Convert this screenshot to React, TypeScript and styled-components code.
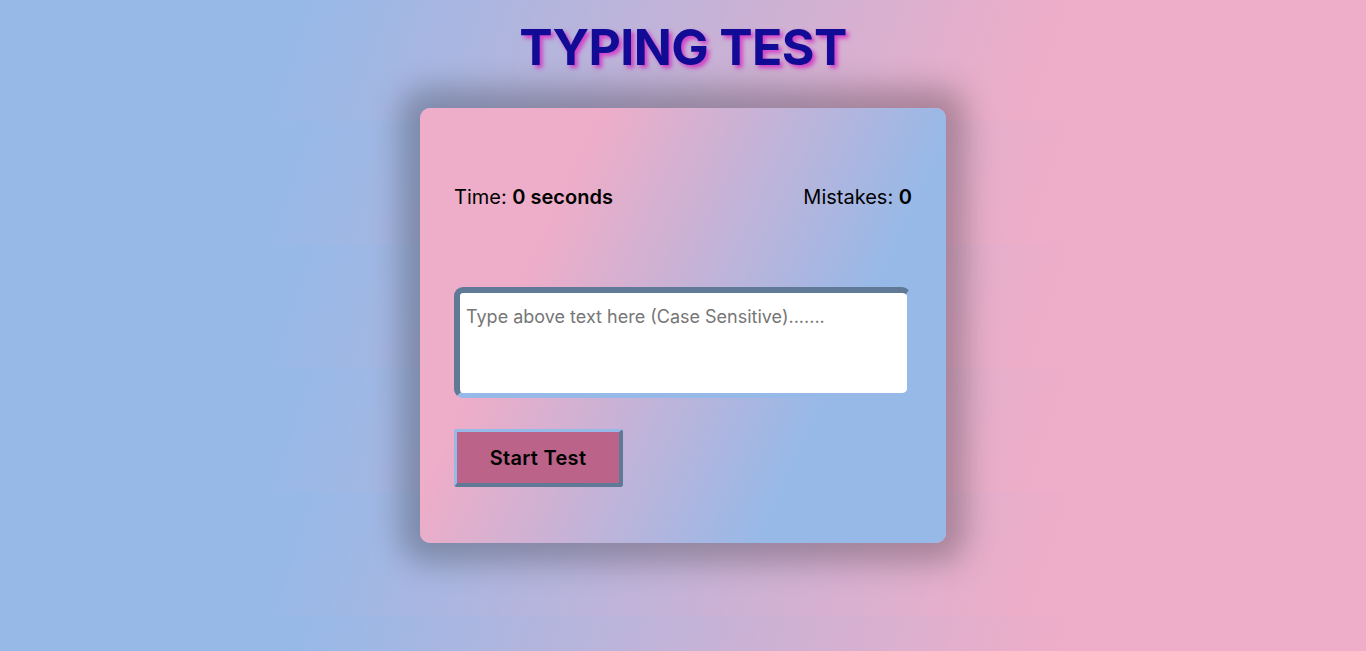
import React from "react";
import styled, { createGlobalStyle } from "styled-components";

const Global = createGlobalStyle`
  html, body { margin: 0; padding: 0; }
  body { font-family: Inter, "Noto Sans", sans-serif; }
`;

const Page = styled.div`
  min-height: 100vh;
  display: flex;
  flex-direction: column;
  align-items: center;
  background-image: linear-gradient(108deg, #96b9e8 21%, #eeadc8 76%);
  background-size: 100% 123.75px;
  background-position: 0 -2.75px;
  background-repeat: repeat;
`;

const Title = styled.h1`
  margin: 17px 0 31px;
  font-family: Inter, sans-serif;
  font-size: 50px;
  line-height: 60px;
  font-weight: 700;
  color: #110b96;
  text-shadow: 3px 3px 4px #d33fc8;
  letter-spacing: -0.6px;
`;

const Card = styled.div`
  width: 526px;
  height: 435px;
  box-sizing: border-box;
  padding: 34px 34px 0;
  border-radius: 10px;
  background: linear-gradient(115deg, #eeadc8 25%, #96b9e8 75%);
  box-shadow: 0 0 30px 20px rgba(0, 0, 0, 0.25);
  display: flex;
  flex-direction: column;
`;

const Quote = styled.div`
  height: 39px;
`;

const Stats = styled.div`
  display: flex;
  justify-content: space-between;
  font-size: 20px;
  line-height: 32px;
  color: #000;
`;

const Stat = styled.span`
  font-weight: 400;
  & b { font-weight: 600; }
`;

const Input = styled.textarea`
  margin-top: 74px;
  width: 457px;
  height: 111px;
  box-sizing: border-box;
  border-style: solid;
  border-width: 6px 4px 5px 6px;
  border-color: #5f7996 #96b9e8 #96b9e8 #5f7996;
  border-radius: 9px;
  padding: 10px 6px;
  resize: none;
  font-family: Inter, sans-serif;
  font-size: 18px;
  line-height: 27px;
  background: #fff;
  outline: none;
  &::placeholder { color: #767676; }
`;

const Button = styled.button`
  margin-top: 31px;
  width: 169px;
  height: 58px;
  box-sizing: border-box;
  border-style: solid;
  border-width: 3px 4px 4px 3px;
  border-color: #96b9e8 #5f7996 #5f7996 #96b9e8;
  border-radius: 3px;
  background: #bb6389;
  color: #000;
  font-family: Inter, sans-serif;
  font-size: 20px;
  font-weight: 600;
  letter-spacing: 0.3px;
  cursor: pointer;
  align-self: flex-start;
`;

export default function App() {
  return (
    <>
      <Global />
      <Page>
        <Title>TYPING TEST</Title>
        <Card>
          <Quote />
          <Stats>
            <Stat>Time: <b>0 seconds</b></Stat>
            <Stat>Mistakes: <b>0</b></Stat>
          </Stats>
          <Input placeholder="Type above text here (Case Sensitive)......." />
          <Button>Start Test</Button>
        </Card>
      </Page>
    </>
  );
}
